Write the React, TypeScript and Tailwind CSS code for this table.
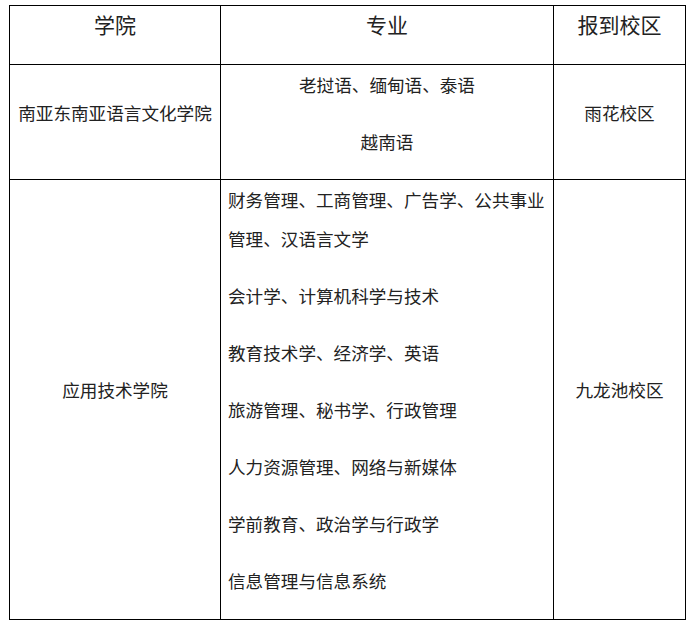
const majors = [
  ["财务管理、工商管理、广告学、公共事业", "管理、汉语言文学"],
  ["会计学、计算机科学与技术"],
  ["教育技术学、经济学、英语"],
  ["旅游管理、秘书学、行政管理"],
  ["人力资源管理、网络与新媒体"],
  ["学前教育、政治学与行政学"],
  ["信息管理与信息系统"],
];

function Para({ children, className = "mb-[18px]" }: { children: React.ReactNode; className?: string }) {
  return <p className={`leading-[39px] ${className}`}>{children}</p>;
}

export default function App() {
  return (
    <div
      className="w-[693px] h-[625px] bg-white pl-[9px] pt-[5px] text-[#222]"
      style={{ fontFamily: '"Noto Sans CJK SC", "Noto Sans", sans-serif' }}
    >
      <div className="grid grid-cols-[211px_333px_132px] w-[677px] border-t border-l border-black text-[17.6px]">
        {/* header */}
        <div className="border-r border-b border-black h-[59px] flex items-center justify-center text-[21px]">
          <Para className="mb-[21px]">学院</Para>
        </div>
        <div className="border-r border-b border-black h-[59px] flex items-center justify-center text-[21px]">
          <Para className="mb-[21px]">专业</Para>
        </div>
        <div className="border-r border-b border-black h-[59px] flex items-center justify-center text-[21px]">
          <Para className="mb-[21px]">报到校区</Para>
        </div>

        {/* row 1 */}
        <div className="border-r border-b border-black flex items-center justify-center">
          <Para className="mb-[20px]">南亚东南亚语言文化学院</Para>
        </div>
        <div className="border-r border-b border-black text-center h-[115px]">
          <Para>老挝语、缅甸语、泰语</Para>
          <Para>越南语</Para>
        </div>
        <div className="border-r border-b border-black flex items-center justify-center">
          <Para className="mb-[20px]">雨花校区</Para>
        </div>

        {/* row 2 */}
        <div className="border-r border-b border-black flex items-center justify-center">
          <Para className="mb-[20px]">应用技术学院</Para>
        </div>
        <div className="border-r border-b border-black pl-[7px] h-[440px]">
          {majors.map((lines, i) => (
            <Para key={i}>
              {lines.map((l, j) => (
                <span key={j} className="block whitespace-nowrap">
                  {l}
                </span>
              ))}
            </Para>
          ))}
        </div>
        <div className="border-r border-b border-black flex items-center justify-center">
          <Para className="mb-[20px]">九龙池校区</Para>
        </div>
      </div>
    </div>
  );
}
